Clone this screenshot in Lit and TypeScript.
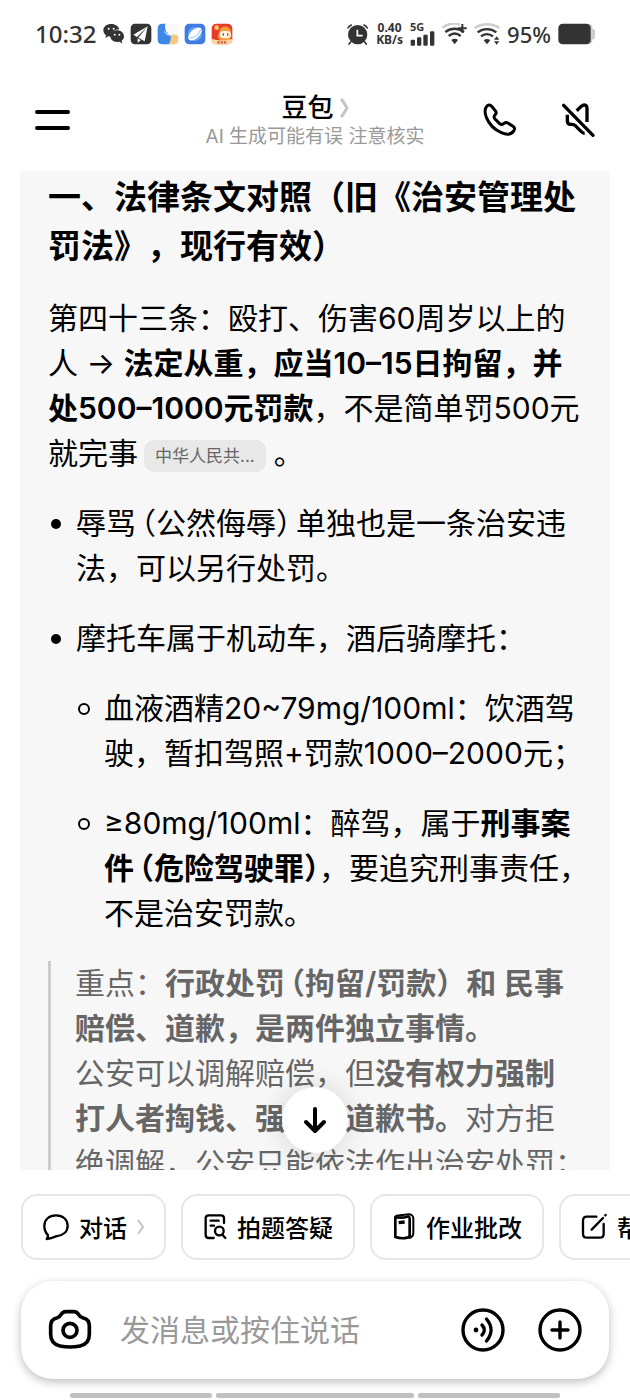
import { LitElement, html, css } from "lit";
import { customElement, state } from "lit/decorators.js";

const icons = {
  wechat: html`<svg width="22" height="22" viewBox="311 67 66 66" aria-hidden="true">
    <path fill="#333" d="M336 70c-14 0-24 8-24 19 0 6 3 11 8 15l-2 8 9-5c3 1 6 1 9 1h2c-3-13 7-22 22-22-2-9-12-16-24-16z"/>
    <path fill="#333" d="M353 89c-12 0-20 8-20 18s9 17 20 17c3 0 5 0 8-1l8 6-2-9c5-3 7-8 7-13 0-10-9-18-21-18z"/>
    <g fill="#fff"><circle cx="328" cy="84" r="3"/><circle cx="343" cy="84" r="3"/><circle cx="346" cy="102" r="3"/><circle cx="360" cy="102" r="3"/></g>
  </svg>`,
  plane: html`<svg width="22" height="22" viewBox="392 67 66 66" aria-hidden="true">
    <rect x="394" y="69" width="62" height="62" rx="13" fill="#333"/>
    <path fill="#fff" d="M445 77l-43 25 11 7zM445 77l-28 34 19 11zM415 113l9 6-9 7z"/>
  </svg>`,
  ball: html`<svg width="22" height="22" viewBox="473 67 66 66" aria-hidden="true">
    <rect x="475" y="69" width="62" height="62" rx="14" fill="#f8f8f8"/>
    <path fill="#f6c983" d="M513 104c8-4 18-3 24 2v13c0 8-5 12-12 12h-18z"/>
    <path fill="#3d87e8" d="M489 69h9c-3 15 2 30 16 35 2 10-1 19-6 27h-19c-9 0-14-5-14-14V83c0-9 5-14 14-14z"/>
    <path fill="none" stroke="#fff" stroke-width="3" d="M496 92c2 8 9 12 18 11"/>
  </svg>`,
  planet: html`<svg width="22" height="22" viewBox="556 67 66 66" aria-hidden="true">
    <rect x="558" y="69" width="62" height="62" rx="14" fill="#3f7be0"/>
    <circle cx="589" cy="100" r="21" fill="#69a9f5"/>
    <ellipse cx="589" cy="100" rx="25" ry="13" fill="#fff" transform="rotate(-42 589 100)"/>
    <path fill="none" stroke="#8fbdf5" stroke-width="3" d="M574 112c15-2 27-11 32-26"/>
  </svg>`,
  festive: html`<svg width="22" height="22" viewBox="638 67 66 66" aria-hidden="true">
    <rect x="640" y="69" width="62" height="62" rx="14" fill="#e9392b"/>
    <circle cx="655" cy="81" r="7" fill="#ffc46b"/>
    <path fill="#f59b3a" d="M664 88c6-14 26-14 33 0l3 20-9 12h-25l-8-12z"/>
    <rect x="665" y="91" width="32" height="22" rx="10" fill="#fff1df"/>
    <path stroke="#8c3323" stroke-width="4" stroke-linecap="round" d="M675 100v3M688 100v3"/>
    <path fill="#fbd5a3" d="M640 114c20 6 42 6 62 0v4c0 8-5 13-14 13h-34c-9 0-14-5-14-13z"/>
    <path stroke="#d2663b" stroke-width="7" stroke-dasharray="7 3" d="M657 125h28"/>
  </svg>`,
  alarm: html`<svg width="23" height="23" viewBox="90 66 69 69" aria-hidden="true">
    <circle cx="125" cy="101" r="29" fill="#333"/>
    <path fill="none" stroke="#333" stroke-width="5" stroke-linecap="round" d="M96 81c2-4 6-7 10-9M154 81c-2-4-6-7-10-9M104 123l-5 6M146 123l5 6"/>
    <path fill="none" stroke="#fff" stroke-width="5" d="M124 86v18h16"/>
  </svg>`,
  bars: html`<svg width="25" height="15" viewBox="294 88 75 45" aria-hidden="true">
    <g fill="#333"><rect x="296" y="114" width="13" height="18" rx="3"/><rect x="315" y="107" width="13" height="25" rx="3"/><rect x="334" y="99" width="13" height="33" rx="3"/><rect x="354" y="89" width="13" height="43" rx="3"/></g>
  </svg>`,
  wifiPlus: html`<svg width="25" height="22" viewBox="387 67 75 66" aria-hidden="true">
    <g fill="none" stroke-width="7"><path stroke="#ccc" d="M388 81c16-13 40-15 53-9"/><path stroke="#333" d="M397 94c17-13 39-13 56 0M407 106c11-9 25-9 36 0"/></g>
    <path fill="#333" d="M415 118c6-5 14-5 20 0l-10 13z"/>
    <path stroke="#333" stroke-width="6" d="M435 83h26M448 70v26"/>
  </svg>`,
  wifi: html`<svg width="26" height="22" viewBox="482 67 78 66" aria-hidden="true">
    <g fill="none" stroke-width="7"><path stroke="#ccc" d="M484 82c21-15 53-15 74 0"/><path stroke="#333" d="M493 95c17-13 39-13 56 0M503 107c10-9 25-9 36 0"/></g>
    <path fill="#333" d="M511 119c6-5 14-5 20 0l-10 12z"/>
    <path fill="#333" d="M550 107l8 10h-16zM550 132l8-10h-16z"/>
  </svg>`,
  battery: html`<svg width="37" height="22" viewBox="729 67 111 66" aria-hidden="true">
    <path fill="#ccc" d="M820 69c7 0 12 4 12 11v4c5 0 8 3 8 8v16c0 5-3 8-8 8v4c0 7-5 11-12 11z"/>
    <rect x="730" y="69" width="97" height="62" rx="13" fill="#333"/>
  </svg>`,
  menu: html`<svg width="36" height="22" viewBox="0 0 36 22" aria-hidden="true">
    <path stroke="#000" stroke-width="4" stroke-linecap="round" d="M2 3h31M2 19h31"/>
  </svg>`,
  phone: html`<svg width="34" height="34" viewBox="504 306 102 102" aria-hidden="true">
    <path fill="none" stroke="#000" stroke-width="9" stroke-linejoin="round" d="M516 315c5-4 10-4 14 1l11 13c4 5 3 9-1 13-5 6-4 8 1 13l12 12c5 5 8 5 13 1 5-4 9-5 14-1l14 9c6 4 6 9 2 14-8 11-22 12-37 5-20-9-37-26-45-46-5-14-5-27 2-34z"/>
  </svg>`,
  mute: html`<svg width="34" height="34" viewBox="736 308 102 102" aria-hidden="true">
    <g fill="none" stroke="#000" stroke-width="10">
      <path stroke-linecap="round" d="M744 315l88 90"/>
      <path stroke-linecap="butt" stroke-linejoin="round" d="M783 331l14-13c8-7 17-5 17 7v40"/>
      <path stroke-linecap="butt" stroke-linejoin="round" d="M755 343v18c0 8 4 11 10 11h4c4 0 7 1 10 4l14 14c5 5 9 9 14 9"/>
    </g>
  </svg>`,
  chevron: html`<svg width="9" height="20" viewBox="0 0 9 20" aria-hidden="true">
    <path fill="none" stroke="#c4c4c4" stroke-width="3" d="M1 1c3 3 4 6 6 9-2 3-3 6-6 9"/>
  </svg>`,
  chevronSmall: html`<svg width="7" height="16" viewBox="0 0 7 16" aria-hidden="true">
    <path fill="none" stroke="#c4c4c4" stroke-width="2" d="M1 1c2 3 3 4 5 7-2 3-3 4-5 7"/>
  </svg>`,
  down: html`<svg width="24" height="32" viewBox="0 0 24 32" aria-hidden="true">
    <path fill="none" stroke="#000" stroke-width="4" stroke-linecap="round" stroke-linejoin="round" d="M12 5v21M3 18l9 9 9-9"/>
  </svg>`,
  bubble: html`<svg width="26" height="28" viewBox="129 98 78 84" aria-hidden="true">
    <path fill="none" stroke="#000" stroke-width="7" stroke-linejoin="round" d="M168 105c21 0 35 13 35 31s-14 30-35 32c-9 4-17 7-28 8 4-4 5-8 3-13-7-7-10-16-10-27 0-18 14-31 35-31z"/>
  </svg>`,
  scan: html`<svg width="24" height="28" viewBox="611 100 72 84" aria-hidden="true">
    <g fill="none" stroke="#000" stroke-width="7" stroke-linecap="round">
      <path d="M674 130v-14c0-7-3-9-9-9h-37c-6 0-9 3-9 9v50c0 6 3 9 9 9h15M634 123h24M634 138h10"/>
      <circle cx="660" cy="154" r="13"/><path d="M670 166l8 9"/>
    </g>
  </svg>`,
  book: html`<svg width="24" height="28" viewBox="232 100 72 84" aria-hidden="true">
    <g fill="none" stroke="#000" stroke-width="8" stroke-linejoin="round">
      <path d="M242 112c13 3 25 2 36-1 5-1 7 1 7 6v48c0 5-2 8-7 9-13 3-24 2-36-2z"/>
      <path stroke-width="6" stroke-linecap="round" d="M245 108l37-4c8 0 14 5 14 12v44c0 8-5 13-12 15"/>
      <path stroke-width="10" d="M252 129l18-2"/>
    </g>
  </svg>`,
  compose: html`<svg width="26" height="28" viewBox="797 100 78 84" aria-hidden="true">
    <g fill="none" stroke="#000" stroke-width="7" stroke-linecap="round">
      <path d="M843 111h-28c-8 0-12 4-12 12v39c0 8 4 12 12 12h38c8 0 12-4 12-12v-29M829 150l34-35M870 107l1-1"/>
    </g>
  </svg>`,
  camera: html`<svg width="44" height="42" viewBox="144 388 132 126" aria-hidden="true">
    <g fill="none" stroke="#000" stroke-width="11" stroke-linejoin="round">
      <path d="M183 405c4-7 8-9 15-9h23c7 0 11 2 15 9 3 6 7 8 14 10 13 3 18 11 18 24v25c0 22-10 31-28 35-20 4-40 4-60 0-18-4-28-13-28-35v-25c0-13 5-21 18-24 7-2 10-4 13-10z"/>
      <circle cx="210" cy="452" r="21"/>
    </g>
  </svg>`,
  voice: html`<svg width="44" height="44" viewBox="0 0 44 44" aria-hidden="true">
    <g fill="none" stroke="#000" stroke-width="3.4" stroke-linecap="round"><circle cx="22" cy="22" r="20"/>
      <path d="M21 17c3 3 3 7 0 10M25.5 11c6 7 6 15 0 22"/></g>
    <circle cx="15" cy="22" r="2.4"/>
  </svg>`,
  plus: html`<svg width="44" height="44" viewBox="0 0 44 44" aria-hidden="true">
    <g fill="none" stroke="#000" stroke-width="3.4" stroke-linecap="round"><circle cx="22" cy="22" r="20"/><path d="M22 14v16M14 22h16"/></g>
  </svg>`,
};

@customElement("app-root")
export class AppRoot extends LitElement {
  @state() private draft = "";

  static styles = css`
    :host {
      display: flex;
      flex-direction: column;
      height: 100vh;
      overflow: hidden;
      background: #fff;
      color: #000;
      font-family: Inter, "Noto Sans CJK SC", sans-serif;
    }
    *, *::before { box-sizing: border-box; }
    svg { display: block; flex: none; }
    button {
      display: flex;
      align-items: center;
      padding: 0;
      border: 0;
      background: none;
      color: inherit;
      font: inherit;
    }
    h1, h2, p, ul, blockquote { margin: 0; padding: 0; }
    .status {
      display: flex;
      justify-content: space-between;
      height: 68px;
      padding: 0 35px;
      color: #333;
      font-family: "Noto Sans", sans-serif;
      font-weight: 500;
      line-height: 30px;
      flex: none;
    }
    .group { display: flex; align-items: center; gap: 7px; }
    .apps { display: flex; gap: 5px; }
    .time { font-size: 24px; }
    .level { font-size: 22px; }
    .stack {
      display: flex;
      flex-direction: column;
      font-size: 12px;
      line-height: 12px;
      font-weight: 700;
      text-align: center;
    }
    .cell { display: flex; flex-direction: column; font-size: 11px; line-height: 8px; font-weight: 700; }
    .top {
      display: grid;
      grid-template-columns: 1fr auto 1fr;
      align-items: center;
      height: 103px;
      padding: 0 35px;
      flex: none;
    }
    .title { display: flex; flex-direction: column; align-items: center; }
    .title h1 { font-size: 26px; line-height: 34px; font-weight: 500; }
    .title h1 button { gap: 6px; }
    .title p { font-size: 19px; line-height: 24px; color: #999; }
    .actions { display: flex; justify-content: flex-end; gap: 44px; }
    main { position: relative; flex: 1; min-height: 0; padding: 0 20px; }
    .sheet {
      height: 100%;
      overflow: hidden;
      background: #f7f7f7;
      padding: 2px 20px 0 28px;
      font-size: 30px;
      line-height: 45px;
      display: flex;
      flex-direction: column;
      gap: 25px;
    }
    .sheet > * { flex: none; }
    h2 { font-size: 33px; line-height: 49px; font-weight: 700; text-spacing-trim: space-all; }
    strong { font-weight: 600; }
    .half { font-feature-settings: "halt"; }
    .open { margin-left: 5px; }
    .close { margin-right: 5px; }
    .cite {
      display: inline-block;
      padding: 0 11px;
      margin: 0 8px 0 6px;
      border-radius: 10px;
      background: #e8e8e8;
      color: #666;
      font-size: 17px;
      line-height: 32px;
      vertical-align: 2px;
      text-decoration: none;
    }
    ul { list-style: none; display: flex; flex-direction: column; gap: 25px; }
    li { display: grid; grid-template-columns: 28px minmax(0, 1fr); }
    li::before {
      content: "";
      width: 10px;
      height: 10px;
      margin: 18px 0 0 3px;
      border-radius: 50%;
      background: #000;
    }
    li li::before { width: 12px; height: 12px; margin: 17px 0 0 2px; border: 2px solid #000; background: none; }
    .nest { display: flex; flex-direction: column; gap: 25px; }
    blockquote { border-left: 3px solid #ccc; padding-left: 24px; color: #666; }
    .down {
      position: absolute;
      left: 50%;
      bottom: 17px;
      width: 66px;
      height: 66px;
      margin-left: -33px;
      justify-content: center;
      border-radius: 50%;
      background: #fff;
      box-shadow: 0 0 28px rgba(0, 0, 0, 0.14);
    }
    .chips { display: flex; gap: 15px; padding: 24px 0 0 21px; overflow: hidden; flex: none; }
    .chip {
      flex: none;
      height: 66px;
      padding: 0 20px;
      gap: 10px;
      border: 2px solid #e6e6e6;
      border-radius: 16px;
      font-family: "Noto Sans CJK SC", sans-serif;
      font-size: 24px;
      line-height: 36px;
      font-weight: 500;
      white-space: nowrap;
    }
    .composer {
      display: flex;
      align-items: center;
      height: 98px;
      margin: 21px 21px 14px;
      padding: 0 27px;
      border-radius: 32px;
      box-shadow: 0 3px 10px rgba(0, 0, 0, 0.26);
      flex: none;
    }
    .composer input {
      flex: 1;
      min-width: 0;
      margin: 0 16px 0 28px;
      padding: 0;
      border: 0;
      outline: 0;
      background: none;
      font: inherit;
      font-size: 30px;
      line-height: 45px;
    }
    .composer input::placeholder { color: #999; opacity: 1; }
    .tools { display: flex; gap: 33px; }
    .gesture { display: grid; grid-template-columns: 143fr 198fr 143fr; gap: 4px; padding: 0 70px 2px; flex: none; }
    .gesture span { height: 5px; border-radius: 2px; background: #c0c0c0; }
  `;

  private onInput(e: Event) {
    this.draft = (e.target as HTMLInputElement).value;
  }

  render() {
    return html`
      <div class="status" lang="zh-CN">
        <div class="group">
          <span class="time">10:32</span>
          <span class="apps">${icons.wechat}${icons.plane}${icons.ball}${icons.planet}${icons.festive}</span>
        </div>
        <div class="group">
          ${icons.alarm}
          <span class="stack"><span>0.40</span><span>KB/s</span></span>
          <span class="cell"><span>5G</span>${icons.bars}</span>
          ${icons.wifiPlus}${icons.wifi}
          <span class="level">95%</span>
          ${icons.battery}
        </div>
      </div>
      <header class="top" lang="zh-CN">
        <button aria-label="菜单">${icons.menu}</button>
        <div class="title">
          <h1><button>豆包${icons.chevron}</button></h1>
          <p>AI 生成可能有误 注意核实</p>
        </div>
        <div class="actions">
          <button aria-label="通话">${icons.phone}</button>
          <button aria-label="静音">${icons.mute}</button>
        </div>
      </header>
      <main lang="zh-CN">
        <article class="sheet">
          <h2>一、法律条文对照（旧《治安管理处罚法》，现行有效）</h2>
          <p>第四十三条：殴打、伤害60周岁以上的人 → <strong>法定从重，应当10–15日拘留，并处500–1000元罚款</strong>，不是简单罚500元就完事<a class="cite" href="#">中华人民共...</a>。</p>
          <ul>
            <li><p>辱骂<span class="half open">（</span>公然侮辱<span class="half close">）</span>单独也是一条治安违法，可以另行处罚。</p></li>
            <li>
              <div class="nest">
                <p>摩托车属于机动车，酒后骑摩托：</p>
                <ul>
                  <li><p>血液酒精20~79mg/100ml：饮酒驾驶，暂扣驾照+罚款1000–2000元；</p></li>
                  <li><p>≥80mg/100ml：醉驾，属于<strong>刑事案件<span class="half open">（</span>危险驾驶罪）</strong>，要追究刑事责任，不是治安罚款。</p></li>
                </ul>
              </div>
            </li>
          </ul>
          <blockquote>
            <p>重点：<strong>行政处罚<span class="half open">（</span>拘留/罚款）和 民事赔偿、道歉，是两件独立事情。</strong></p>
            <p>公安可以调解赔偿，但<strong>没有权力强制<br>打人者掏钱、强迫写道歉书。</strong>对方拒<br>绝调解，公安只能依法作出治安处罚；</p>
          </blockquote>
        </article>
        <button class="down" aria-label="回到底部">${icons.down}</button>
      </main>
      <nav class="chips" lang="zh-CN">
        <button class="chip">${icons.bubble}对话${icons.chevronSmall}</button>
        <button class="chip">${icons.scan}拍题答疑</button>
        <button class="chip">${icons.book}作业批改</button>
        <button class="chip">${icons.compose}帮我写作</button>
      </nav>
      <div class="composer" lang="zh-CN">
        <button aria-label="拍照">${icons.camera}</button>
        <input type="text" aria-label="消息" placeholder="发消息或按住说话" .value=${this.draft} @input=${this.onInput} />
        <div class="tools">
          <button aria-label="语音">${icons.voice}</button>
          <button aria-label="更多">${icons.plus}</button>
        </div>
      </div>
      <div class="gesture" aria-hidden="true"><span></span><span></span><span></span></div>
    `;
  }
}
